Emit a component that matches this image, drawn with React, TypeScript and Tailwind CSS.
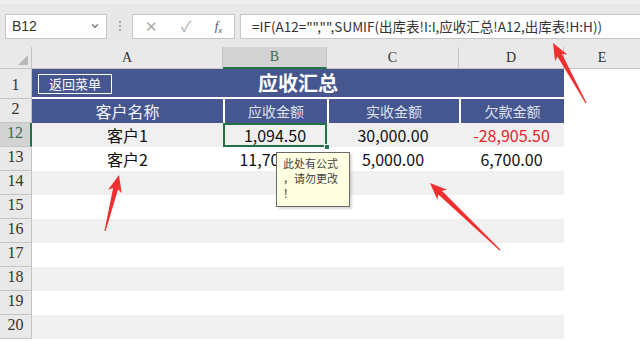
import { ChevronDown } from "lucide-react";

const cjk = { fontFamily: '"Noto Sans CJK SC", "Noto Sans", sans-serif' };
const serif = { fontFamily: '"Liberation Serif", "DejaVu Serif", serif' };

// column widths: row header, A, B, C, D
const cols = ["w-[32px]", "w-[191px]", "w-[104px]", "w-[132px]", "w-[105px]"];

const dataRows = [
  { n: "12", name: "客户1", due: "1,094.50", paid: "30,000.00", owe: "-28,905.50", red: true, band: true, active: true },
  { n: "13", name: "客户2", due: "11,700.00", paid: "5,000.00", owe: "6,700.00", band: false },
];
const emptyRows = ["14", "15", "16", "17", "18", "19", "20"];

// red arrow, thin tail -> fat head
function arrow(x1: number, y1: number, x2: number, y2: number) {
  const dx = x2 - x1;
  const dy = y2 - y1;
  const len = Math.hypot(dx, dy);
  const ux = dx / len;
  const uy = dy / len;
  const px = -uy;
  const py = ux;
  const headLen = 17;
  const bx = x2 - ux * headLen;
  const by = y2 - uy * headLen;
  const pt = (x: number, y: number, w: number) => [x + px * w, y + py * w];
  const pts = [
    pt(x1, y1, 0.6),
    pt(bx + ux * 3, by + uy * 3, 2.6),
    pt(bx, by, 7),
    [x2, y2],
    pt(bx, by, -7),
    pt(bx + ux * 3, by + uy * 3, -2.6),
    pt(x1, y1, -0.6),
  ];
  return pts.map((p) => p.map((v) => v.toFixed(1)).join(",")).join(" ");
}

const RowHead = ({ n, h, active }: { n: string; h: string; active?: boolean }) => (
  <div
    className={`${cols[0]} ${h} shrink-0 flex items-end justify-center pb-[1px] border-b border-[#c4c4c4] text-[16px] ${
      active ? "bg-[#d3d3d3] text-[#3d6b4c] border-r-2 border-r-[#217346]" : "bg-[#e9e9e9] text-[#333] border-r border-r-[#c4c4c4]"
    }`}
    style={serif}
  >
    {n}
  </div>
);

export default function App() {
  return (
    <div className="relative w-[640px] h-[342px] overflow-hidden bg-white" style={cjk}>
      {/* formula bar */}
      <div className="h-[47px] bg-[#e8e8e8] border-t-[4px] border-t-[#efefef] flex items-center gap-0 pl-[5px] pt-[1px]">
        <div className="w-[102px] h-[25px] bg-white border border-[#c6c6c6] flex items-center justify-between pl-[6px] pr-[6px]">
          <span className="text-[14px] text-[#333]" style={{ fontFamily: '"Liberation Sans", sans-serif' }}>B12</span>
          <ChevronDown size={10} strokeWidth={3} className="text-[#777]" />
        </div>
        <div className="w-[25px] flex flex-col items-center gap-[2px]">
          <span className="w-[2px] h-[2px] bg-[#aaa]" />
          <span className="w-[2px] h-[2px] bg-[#aaa]" />
          <span className="w-[2px] h-[2px] bg-[#aaa]" />
        </div>
        <div className="w-[103px] h-[25px] bg-white border border-[#c6c6c6] flex items-center justify-around text-[#aaa] text-[15px]">
          <span>✕</span>
          <span>✓</span>
          <span className="text-[#555] italic text-[13px]" style={serif}>
            f<sub className="text-[9px]">x</sub>
          </span>
        </div>
        <div className="ml-[5px] flex-1 h-[25px] bg-white border border-[#c6c6c6] border-r-0 flex items-center pl-[11px] text-[13.5px] text-[#333] whitespace-nowrap">
          =IF(A12="","",SUMIF(出库表!I:I,应收汇总!A12,出库表!H:H))
        </div>
      </div>

      {/* column headers */}
      <div className="flex h-[22px] bg-[#e9e9e9] text-[14px] text-[#333]" style={serif}>
        <div className={`${cols[0]} shrink-0 relative border-r border-b border-[#c4c4c4]`}>
          <svg className="absolute right-[3px] bottom-[3px]" width="10" height="10">
            <polygon points="10,0 10,10 0,10" fill="#b8b8b8" />
          </svg>
        </div>
        <div className={`${cols[1]} shrink-0 flex items-end justify-center border-r border-b border-[#c4c4c4]`}>A</div>
        <div className={`${cols[2]} shrink-0 flex items-end justify-center bg-[#d3d3d3] border-r border-[#c4c4c4] border-b-2 border-b-[#217346] text-[#3d6b4c]`}>B</div>
        <div className={`${cols[3]} shrink-0 flex items-end justify-center border-r border-b border-[#c4c4c4]`}>C</div>
        <div className={`${cols[4]} shrink-0 flex items-end justify-center border-r border-b border-[#c4c4c4]`}>D</div>
        <div className="flex-1 flex items-end justify-center border-b border-[#c4c4c4]">E</div>
      </div>

      {/* row 1 */}
      <div className="flex">
        <RowHead n="1" h="h-[30px]" />
        <div className="w-[532px] h-[30px] relative bg-[#46568f] border-b-2 border-white flex items-center justify-center">
          <div className="absolute left-[6px] top-[5px] w-[74px] h-[20px] border border-white flex items-center justify-center text-[13px] text-white">
            返回菜单
          </div>
          <span className="text-[20px] font-bold text-white">应收汇总</span>
        </div>
      </div>

      {/* row 2 */}
      <div className="flex">
        <RowHead n="2" h="h-[24px]" />
        <div className={`${cols[1]} h-[24px] shrink-0 bg-[#46568f] flex items-center justify-center text-[16px] text-[#f2f3f8]`}>客户名称</div>
        <div className={`${cols[2]} h-[24px] shrink-0 bg-[#46568f] border-l-2 border-white flex items-center justify-center text-[14px] text-[#dde1ee]`}>应收金额</div>
        <div className={`${cols[3]} h-[24px] shrink-0 bg-[#46568f] border-l-2 border-white flex items-center justify-center text-[14px] text-[#dde1ee]`}>实收金额</div>
        <div className={`${cols[4]} h-[24px] shrink-0 bg-[#46568f] border-l-2 border-white flex items-center justify-center text-[14px] text-[#dde1ee]`}>欠款金额</div>
      </div>

      {/* data rows */}
      {dataRows.map((r) => (
        <div key={r.n} className="flex">
          <RowHead n={r.n} h="h-[24px]" active={r.active} />
          <div className={`flex w-[532px] h-[24px] text-[16px] text-[#111] ${r.band ? "bg-[#f0f0f0]" : "bg-white"}`}>
            <div className={`${cols[1]} shrink-0 flex items-center justify-center`}>{r.name}</div>
            <div className={`${cols[2]} shrink-0 relative flex items-center justify-center`}>
              {r.due}
              {r.active && (
                <>
                  <div className="absolute inset-0 border-2 border-[#217346]" />
                  <div className="absolute right-[-3px] bottom-[-3px] w-[6px] h-[6px] bg-[#217346] border border-white" />
                </>
              )}
            </div>
            <div className={`${cols[3]} shrink-0 flex items-center justify-center`}>{r.paid}</div>
            <div className={`${cols[4]} shrink-0 flex items-center justify-center ${r.red ? "text-[#e8212b]" : ""}`}>{r.owe}</div>
          </div>
        </div>
      ))}

      {emptyRows.map((n, i) => (
        <div key={n} className="flex">
          <RowHead n={n} h="h-[24px]" />
          <div className={`w-[532px] h-[24px] ${i % 2 === 0 ? "bg-[#f0f0f0]" : "bg-white"}`} />
        </div>
      ))}

      {/* comment note */}
      <div className="absolute left-[276px] top-[152px] w-[74px] h-[55px] bg-[#ffffe1] border border-[#6b6b6b] shadow-[2px_2px_2px_rgba(0,0,0,0.15)] pl-[6px] pt-[3px] text-[11px] leading-[15px] text-[#444]">
        <div>此处有公式</div>
        <div>，请勿更改</div>
        <div>！</div>
      </div>

      {/* red arrows */}
      <svg className="absolute inset-0 pointer-events-none" width="640" height="342">
        <polygon points={arrow(586, 103, 553, 43)} fill="#f03030" />
        <polygon points={arrow(105, 231, 119, 175)} fill="#f03030" />
        <polygon points={arrow(500, 250, 430, 183)} fill="#f03030" />
      </svg>
    </div>
  );
}
